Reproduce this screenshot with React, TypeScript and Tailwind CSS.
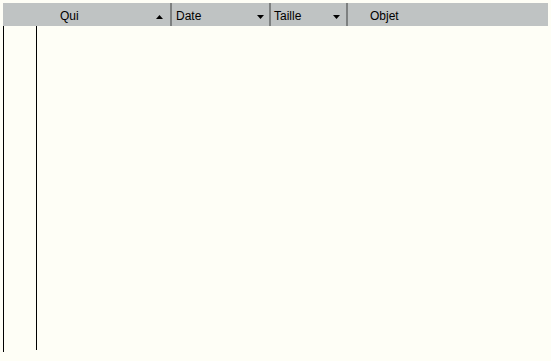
import React from 'react';

const Sep = () => <div className="w-[2px] h-full bg-[#7d8080]" />;

const Arrow = ({ up }: { up?: boolean }) => (
    <svg width="7" height="4" viewBox="0 0 7 4" className="shrink-0 mt-[2px]">
        {up ? <polygon points="3.5,0 7,4 0,4" fill="#000" /> : <polygon points="0,0 7,0 3.5,4" fill="#000" />}
    </svg>
);

export default function App() {
    return (
        <div
            className="w-[551px] h-[361px] bg-[#fefef6] pt-[3px] pl-[3px] text-[12px] text-black"
            style={{ fontFamily: '"Liberation Sans", Arial, sans-serif' }}
        >
            <div className="flex w-[545px] h-[23px] bg-[#bfc3c3] items-stretch">
                <div className="w-[167px] flex items-center pt-[2px] pl-[57px] pr-[7px]">
                    <span className="flex-1">Qui</span>
                    <Arrow up />
                </div>
                <Sep />
                <div className="w-[97px] flex items-center pt-[2px] pl-[4px] pr-[5px]">
                    <span className="flex-1">Date</span>
                    <Arrow />
                </div>
                <Sep />
                <div className="w-[75px] flex items-center pt-[2px] pl-[3px] pr-[6px]">
                    <span className="flex-1">Taille</span>
                    <Arrow />
                </div>
                <Sep />
                <div className="flex-1 flex items-center pt-[2px] pl-[22px]">
                    <span>Objet</span>
                </div>
            </div>
            <div className="flex">
                <div className="w-px h-[326px] bg-black" />
                <div className="w-[32px]" />
                <div className="w-px h-[324px] bg-black" />
            </div>
        </div>
    );
}
